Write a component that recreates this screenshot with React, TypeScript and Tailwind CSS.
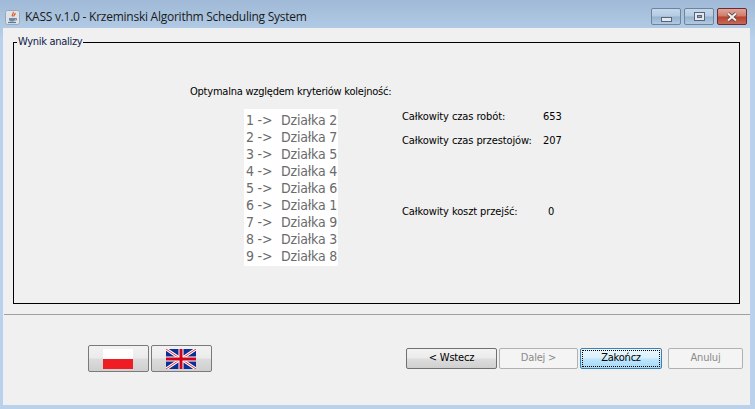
const rows = [
  ["1", "Działka 2"],
  ["2", "Działka 7"],
  ["3", "Działka 5"],
  ["4", "Działka 4"],
  ["5", "Działka 6"],
  ["6", "Działka 1"],
  ["7", "Działka 9"],
  ["8", "Działka 3"],
  ["9", "Działka 8"],
];

const JavaIcon = () => (
  <svg width="15" height="15" viewBox="0 0 15 15" className="shrink-0">
    <rect x="0.5" y="0.5" width="14" height="14" rx="2" fill="#dfe3e8" stroke="#9aa8b8" />
    <path d="M8 2c1.500 1.500-2 2.500-.5 4.500M10 3c1 1.500-2 2-1 3.500" fill="none" stroke="#d9541e" strokeWidth="1.200" />
    <path d="M4 8h6v1.500c0 1-1 2-2 2H6c-1 0-2-1-2-2z" fill="#6c87a8" />
    <path d="M10 8.500h1.500v1.500H10" fill="none" stroke="#6c87a8" />
    <path d="M3 12.500h8" stroke="#5c7898" strokeWidth="1.200" />
  </svg>
);

const UkFlag = () => (
  <svg width="30" height="20" viewBox="0 0 30 20" className="block">
    <rect width="30" height="20" fill="#0a2f96" />
    <path d="M0 0L30 20M30 0L0 20" stroke="#ffffff" strokeWidth="3" />
    <path d="M0 0L30 20M30 0L0 20" stroke="#e8303c" strokeWidth="1" />
    <path d="M15 0V20M0 10H30" stroke="#ffffff" strokeWidth="5" />
    <path d="M15 0V20M0 10H30" stroke="#d40018" strokeWidth="3" />
  </svg>
);

const WinButton = ({ kind }: { kind: "min" | "max" | "close" }) => {
  const cls =
    kind === "close"
      ? "border-[#6b2a36] bg-[linear-gradient(#e0a598_0%,#d07a68_48%,#b8402c_52%,#c86a55_100%)]"
      : "border-[#6f839c] bg-[linear-gradient(#c4d8ec_0%,#b4cbe2_48%,#96b2cd_52%,#b0c9e0_100%)]";
  return (
    <div className={`w-[30px] h-[17px] border rounded-[2px] flex items-center justify-center ${cls}`}>
      {kind === "min" && <div className="w-[11px] h-[5px] mt-[5px] bg-[#e4e8ee] border border-[#56657a]" />}
      {kind === "max" && (
        <div className="w-[11px] h-[9px] bg-[#e4e8ee] border border-[#56657a] flex items-center justify-center">
          <div className="w-[5px] h-[3px] bg-[#8fa5bd] border border-[#56657a]" />
        </div>
      )}
      {kind === "close" && (
        <svg width="12" height="10" viewBox="0 0 12 10">
          <path d="M2 1.500L10 8.500M10 1.500L2 8.500" stroke="#4a3434" strokeWidth="3.600" />
          <path d="M2 1.500L10 8.500M10 1.500L2 8.500" stroke="#f1f1f1" strokeWidth="2.200" />
        </svg>
      )}
    </div>
  );
};

const FlagButton = ({ width, children }: { width: string; children: React.ReactNode }) => (
  <button className={`${width} h-[27px] border border-[#7a7a7a] rounded-[2px] pr-[2px] flex items-center justify-center bg-[linear-gradient(#f2f2f2_0%,#ebebeb_48%,#dcdcdc_52%,#cfcfcf_100%)]`}>
    {children}
  </button>
);

const Button = ({ label, width, disabled, active }: { label: string; width: string; disabled?: boolean; active?: boolean }) => {
  if (disabled) {
    return (
      <button className={`${width} h-[21px] border border-[#adb2b5] rounded-[2px] bg-[#f4f4f4] text-[#8a8a8a] tracking-[-0.2px]`}>
        {label}
      </button>
    );
  }
  if (active) {
    return (
      <button className={`${width} h-[21px] border border-[#3c7fb1] rounded-[2px] p-[1px] bg-[linear-gradient(#eaf6fd_0%,#d9f0fc_48%,#bee6fd_52%,#a7d9f5_100%)] text-black tracking-[-0.2px]`}>
        <span className="flex h-full items-center justify-center border border-dotted border-black">{label}</span>
      </button>
    );
  }
  return (
    <button className={`${width} h-[21px] border border-[#707070] rounded-[2px] bg-[linear-gradient(#f2f2f2_0%,#ebebeb_48%,#dddddd_52%,#cfcfcf_100%)] text-black tracking-[-0.2px]`}>
      {label}
    </button>
  );
};

export default function App() {
  return (
    <div className="w-[755px] h-[409px] overflow-hidden flex flex-col bg-[linear-gradient(#9fb9d6_0px,#b9d1ea_40px,#b9d1ea_100%)] font-['DejaVu_Sans_Condensed','DejaVu_Sans',sans-serif] [font-stretch:condensed] text-[11px] text-black">
      <div className="h-[28px] shrink-0 flex items-start justify-between pl-[5px] pr-[8px]">
        <div className="flex items-center gap-[5px] mt-[9px]">
          <JavaIcon />
          <span className="text-[12px] leading-[16px] tracking-[-0.25px] text-[#1a1a1a] font-['Open_Sans',sans-serif] [font-stretch:normal]">
            KASS v.1.0 - Krzeminski Algorithm Scheduling System
          </span>
        </div>
        <div className="flex gap-[3px] mt-[8px]">
          <WinButton kind="min" />
          <WinButton kind="max" />
          <WinButton kind="close" />
        </div>
      </div>

      <div className="ml-[3px] mr-[5px] h-[377px] bg-[#f0f0f0] flex flex-col">
        <fieldset className="ml-[10px] mr-[10px] h-[269px] mt-[7px] border border-black px-[3px] min-w-0">
          <legend className="px-[1px] ml-0 leading-[14px] tracking-[-0.3px] text-[#10204a]">Wynik analizy</legend>
          <div className="flex pt-[36px]">
            <div className="w-[173px] shrink-0" />
            <div className="w-[212px] shrink-0 flex flex-col">
              <div className="leading-[14px] tracking-[-0.23px] whitespace-nowrap">Optymalna względem kryteriów kolejność:</div>
              <div className="mt-[10px] ml-[54px] w-[94px] h-[157px] bg-white pt-[3px] pl-[2px] text-[14px] leading-[17px] tracking-[-0.2px] text-[#6b6b6b]">
                {rows.map(([n, name]) => (
                  <div key={n} className="flex h-[17px] whitespace-nowrap">
                    <span className="w-[35px]">{n} -&gt;</span>
                    <span>{name}</span>
                  </div>
                ))}
              </div>
            </div>
            <div className="flex-1 pt-[25px] flex flex-col tracking-[-0.1px]">
              <div className="flex h-[14px] leading-[14px]">
                <span className="w-[141px]">Całkowity czas robót:</span>
                <span>653</span>
              </div>
              <div className="flex h-[14px] leading-[14px] mt-[10px]">
                <span className="w-[141px]">Całkowity czas przestojów:</span>
                <span>207</span>
              </div>
              <div className="flex h-[14px] leading-[14px] mt-[57px]">
                <span className="w-[146px]">Całkowity koszt przejść:</span>
                <span>0</span>
              </div>
            </div>
          </div>
        </fieldset>

        <div className="mt-[10px] ml-[1px] h-[1px] bg-[#a0a0a0]" />

        <div className="flex items-start pt-[30px] pl-[85px]">
          <div className="flex gap-[2px]">
            <FlagButton width="w-[61px]">
              <div className="w-[30px] h-[20px] flex flex-col">
                <div className="h-[10px] bg-white" />
                <div className="h-[10px] bg-[#f01c24]" />
              </div>
            </FlagButton>
            <FlagButton width="w-[61px]">
              <UkFlag />
            </FlagButton>
          </div>
          <div className="flex items-center ml-[194px] mt-[3px]">
            <Button label="< Wstecz" width="w-[91px]" />
            <Button label="Dalej >" width="w-[79px] ml-[2px]" disabled />
            <Button label="Zakończ" width="w-[82px] ml-[2px]" active />
            <Button label="Anuluj" width="w-[75px] ml-[6px]" disabled />
          </div>
        </div>
      </div>
    </div>
  );
}
